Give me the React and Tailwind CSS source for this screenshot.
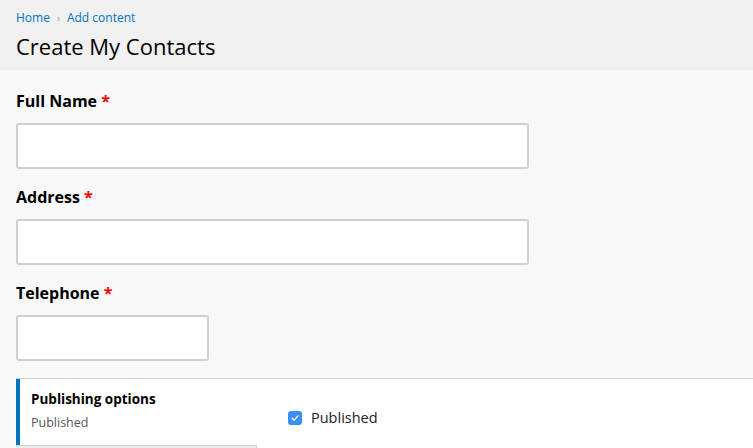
export default function App() {
  return (
    <div className="min-h-[448px] bg-[#f8f8f8] font-['Open_Sans',sans-serif] text-[#222]">
      <div className="bg-[#f0f0f0] px-4 pt-[9px] pb-[9px]">
        <div className="flex items-center text-[12px] text-[#0074bd]">
          <span>Home</span>
          <span className="mx-[7px] text-[10px] text-[#999]">›</span>
          <span>Add content</span>
        </div>
        <h1 className="mt-[4px] text-[22px] leading-[30px] text-black">Create My Contacts</h1>
      </div>

      <div className="px-4 pt-[21px] flex flex-col gap-[18px]">
        <Field label="Full Name" width="w-[513px]" />
        <Field label="Address" width="w-[513px]" />
        <Field label="Telephone" width="w-[193px]" />
      </div>

      <div className="ml-4 mt-[17px] border-t border-[#cccccc] bg-white flex">
        <div className="w-[241px] shrink-0">
          <div className="border-l-4 border-[#0074bd] pl-[11px] pt-[11px] pb-[14px]">
            <div className="text-[13.5px] font-bold text-black leading-[18px]">Publishing options</div>
            <div className="mt-[7px] text-[12.5px] text-[#555] leading-[16px]">Published</div>
          </div>
          <div className="h-[4px] border-t border-[#d0d0d0] border-r bg-[#ececec]" />
        </div>
        <div className="pl-[31px] pt-[29px] flex items-start">
          <span className="mt-[3px] flex h-[14px] w-[14px] items-center justify-center rounded-[3px] bg-[#3b8ff6]">
            <svg viewBox="0 0 12 12" className="h-[10px] w-[10px]" fill="none" stroke="white" strokeWidth="1.6" strokeLinecap="round" strokeLinejoin="round">
              <path d="M2.5 6.3 L5 8.6 L9.5 3.4" />
            </svg>
          </span>
          <span className="ml-[9px] text-[14.5px] leading-[20px] text-[#222]">Published</span>
        </div>
      </div>
    </div>
  );
}

function Field({ label, width }) {
  return (
    <div>
      <div className="text-[16px] font-bold leading-[20px] text-black">
        {label} <span className="text-[#e00]">*</span>
      </div>
      <div className={`mt-[12px] h-[46px] ${width} rounded-[3px] border-2 border-[#d0d0d0] bg-white`} />
    </div>
  );
}
